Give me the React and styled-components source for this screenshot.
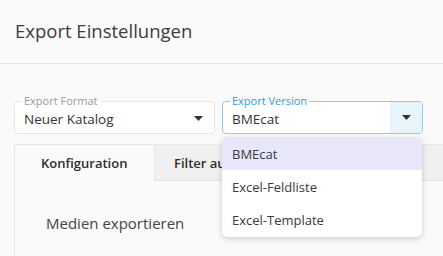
import React from 'react'
import styled, { createGlobalStyle } from 'styled-components'

const Global = createGlobalStyle`
  html, body {
    margin: 0;
    background: #fafafa;
    font-family: "Open Sans", "Noto Sans", sans-serif;
    color: #3a3a3a;
    overflow: hidden;
  }
`

const Page = styled.div`
  width: 443px;
  height: 256px;
  overflow: hidden;
`

const Header = styled.div`
  height: 64px;
  display: flex;
  align-items: center;
  padding: 0 15px 3px;
  box-sizing: border-box;
  border-bottom: 1px solid #e3e3e3;
  font-size: 18.5px;
  color: #3c3c3c;
`

const Body = styled.div`
  padding: 37px 0 0 14px;
`

const FieldRow = styled.div`
  display: flex;
  gap: 7px;
`

const Field = styled.div`
  position: relative;
  width: ${p => p.$width}px;
  height: 33px;
  box-sizing: border-box;
  border: 1px solid ${p => (p.$active ? '#8fcdec' : '#e6e6e6')};
  border-radius: 4px;
  background: #fff;
  display: flex;
  align-items: center;
`

const Legend = styled.span`
  position: absolute;
  left: 7px;
  top: -8px;
  padding: 0 2px;
  font-size: 11px;
  line-height: 14px;
  color: ${p => (p.$active ? '#2a9fdb' : '#9a9a9a')};
  background: linear-gradient(#fafafa 50%, #fff 50%);
`

const Value = styled.span`
  flex: 1;
  padding-left: 9px;
  padding-top: 3px;
  font-size: 13.5px;
  color: #333;
`

const ArrowBox = styled.div`
  width: 32px;
  align-self: stretch;
  display: flex;
  align-items: center;
  justify-content: center;
  margin-top: ${p => (p.$active ? '0' : '1px')};
  background: ${p => (p.$active ? '#e8f4fb' : 'transparent')};
  border-radius: 0 3px 3px 0;
`

const Menu = styled.div`
  position: absolute;
  left: -1px;
  top: 35px;
  width: 200px;
  background: #fff;
  border-radius: 6px;
  box-shadow: 0 2px 6px rgba(0, 0, 0, 0.18);
  overflow: hidden;
  z-index: 5;
  padding-bottom: 1px;
`

const MenuItem = styled.div`
  height: 33px;
  display: flex;
  align-items: center;
  padding-left: 10px;
  font-size: 13px;
  color: #3a3a3a;
  background: ${p => (p.$selected ? '#e8e6f9' : '#fff')};
`

const Tabs = styled.div`
  margin-top: 10px;
  border-left: 1px solid #e6e6e6;
`

const TabBar = styled.div`
  display: flex;
  height: 37px;
  box-sizing: border-box;
  border-top: 1px solid #e6e6e6;
  background: #f0f0f0;
`

const Tab = styled.div`
  width: ${p => p.$width}px;
  flex: ${p => (p.$grow ? 1 : 'none')};
  box-sizing: border-box;
  display: flex;
  align-items: center;
  padding-left: ${p => p.$pad}px;
  white-space: nowrap;
  font-size: 13px;
  font-weight: 600;
  color: #2e2e2e;
  background: ${p => (p.$active ? '#fafafa' : '#f0f0f0')};
  border-bottom: 1px solid ${p => (p.$active ? '#fafafa' : '#e3e3e3')};
  border-left: ${p => (p.$active ? 'none' : '1px solid #e6e6e6')};
`

const Panel = styled.div`
  min-height: 90px;
  padding: 32px 0 0 31px;
  font-size: 15px;
  color: #444;
`

const Caret = () => (
  <svg width="9" height="5" viewBox="0 0 9 5">
    <path d="M0 0h9L4.5 5z" fill="#333" />
  </svg>
)

export default function App() {
  return (
    <Page>
      <Global />
      <Header>Export Einstellungen</Header>
      <Body>
        <FieldRow>
          <Field $width={201}>
            <Legend>Export Format</Legend>
            <Value>Neuer Katalog</Value>
            <ArrowBox>
              <Caret />
            </ArrowBox>
          </Field>
          <Field $width={201} $active>
            <Legend $active>Export Version</Legend>
            <Value>BMEcat</Value>
            <ArrowBox $active>
              <Caret />
            </ArrowBox>
            <Menu>
              <MenuItem $selected>BMEcat</MenuItem>
              <MenuItem>Excel-Feldliste</MenuItem>
              <MenuItem>Excel-Template</MenuItem>
            </Menu>
          </Field>
        </FieldRow>
        <Tabs>
          <TabBar>
            <Tab $active $width={139} $pad={26}>Konfiguration</Tab>
            <Tab $grow $pad={19}>Filter auswählen</Tab>
          </TabBar>
          <Panel>Medien exportieren</Panel>
        </Tabs>
      </Body>
    </Page>
  )
}
